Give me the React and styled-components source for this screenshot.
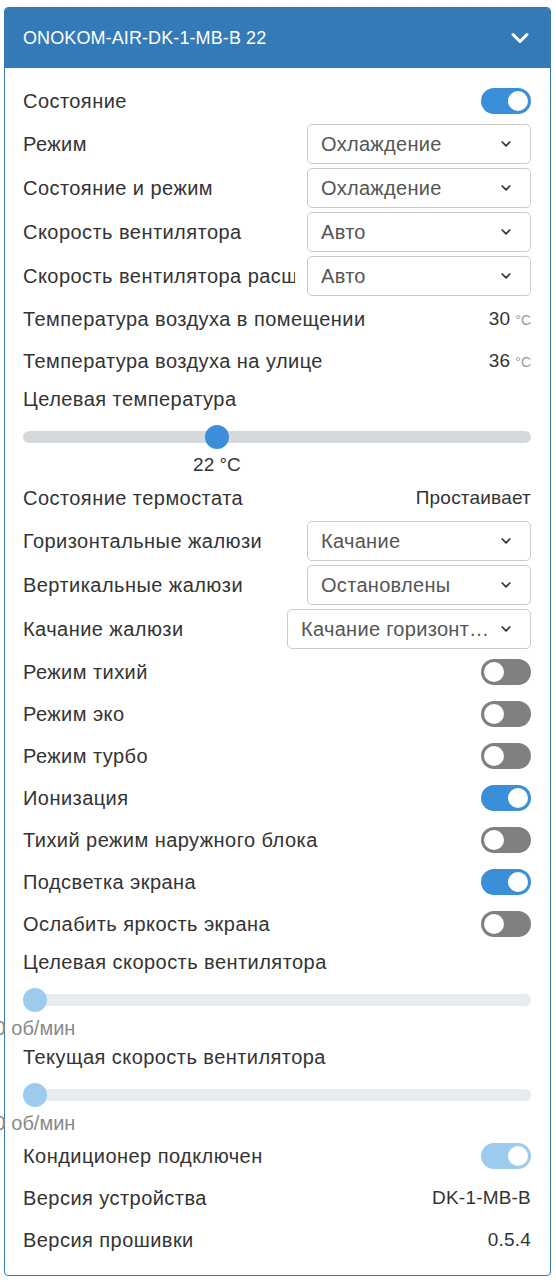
import React from 'react';
import styled, { createGlobalStyle } from 'styled-components';

const GlobalStyle = createGlobalStyle`
  html, body {
    margin: 0;
    padding: 0;
    background: #fff;
  }
  body {
    font-family: "Liberation Sans", Arial, sans-serif;
    color: #333;
  }
`;

const Page = styled.div`
  padding: 7px 5px 6px 4px;
`;

const Card = styled.div`
  border: 1px solid #337ab7;
  border-radius: 4px;
  background: #fff;
`;

const Header = styled.div`
  height: 60px;
  background: #337ab7;
  border-radius: 3px 3px 0 0;
  display: flex;
  align-items: center;
  justify-content: space-between;
  padding: 0 16px 0 18px;
  color: #fff;
  font-size: 18px;
  letter-spacing: 0.1px;
`;

const Body = styled.div`
  padding: 12px 19px 14px 18px;
`;

const Row = styled.div`
  display: flex;
  align-items: center;
  justify-content: space-between;
  gap: 12px;
  height: ${p => (p.$select ? 44 : 42)}px;
`;

const Label = styled.div`
  flex: 1 1 auto;
  min-width: 0;
  font-size: 20px;
  letter-spacing: 0.45px;
  white-space: nowrap;
  overflow: hidden;
`;

const Value = styled.div`
  font-size: 19px;
  letter-spacing: 0.2px;
  white-space: nowrap;
  flex-shrink: 0;
`;

const Unit = styled.span`
  font-size: 14px;
  letter-spacing: 0;
  color: #999;
  margin-left: 5px;
`;

const Select = styled.div`
  flex-shrink: 0;
  width: ${p => p.$width || 224}px;
  height: 40px;
  box-sizing: border-box;
  border: 1px solid #ccc;
  border-radius: 5px;
  display: flex;
  align-items: center;
  gap: 8px;
  padding: 0 19px 0 13px;
  color: #555;
  font-size: 20px;
  letter-spacing: 0.3px;
`;

const SelectText = styled.span`
  flex: 1;
  min-width: 0;
  white-space: nowrap;
  overflow: hidden;
  text-overflow: ellipsis;
`;

const Toggle = styled.div`
  flex-shrink: 0;
  width: 50px;
  height: 26px;
  box-sizing: border-box;
  border-radius: 13px;
  padding: 3px;
  display: flex;
  justify-content: ${p => (p.$on ? 'flex-end' : 'flex-start')};
  background: ${p => (p.$disabled ? '#9ccbee' : p.$on ? '#3b8fd9' : '#808080')};
`;

const Knob = styled.div`
  width: 20px;
  height: 20px;
  border-radius: 50%;
  background: #fff;
`;

const SliderBlock = styled.div`
  padding-bottom: 2px;
`;

const SliderLabel = styled.div`
  height: 34px;
  line-height: 34px;
  font-size: 20px;
  letter-spacing: 0.45px;
  white-space: nowrap;
`;

const Track = styled.div`
  position: relative;
  margin-top: 15px;
  height: 12px;
  border-radius: 6px;
  background: ${p => (p.$disabled ? '#e9ecef' : '#d6d9dc')};
`;

const Thumb = styled.div`
  position: absolute;
  top: -6px;
  width: 24px;
  height: 24px;
  border-radius: 50%;
  background: ${p => (p.$disabled ? '#9ccbee' : '#3a8fd8')};
`;

const ValueLine = styled.div`
  position: relative;
  margin-top: 12px;
  height: 20px;
`;

const SliderValue = styled.div`
  position: absolute;
  top: 0;
  transform: translateX(-50%);
  font-size: ${p => (p.$disabled ? 20 : 19)}px;
  line-height: 20px;
  white-space: nowrap;
  color: ${p => (p.$disabled ? '#888' : '#333')};
`;

const HeaderChevron = () => (
  <svg width="28" height="28" viewBox="0 0 24 24" fill="none" stroke="#fff" strokeWidth="2.6" strokeLinecap="round" strokeLinejoin="round">
    <polyline points="6 9 12 15 18 9" />
  </svg>
);

const SmallChevron = () => (
  <svg width="10" height="6" viewBox="0 0 10 6" fill="none" stroke="#333" strokeWidth="1.7" strokeLinecap="round" strokeLinejoin="round">
    <polyline points="1.2 1 5 4.8 8.8 1" />
  </svg>
);

const SelectRow = ({ label, value, width }) => (
  <Row $select>
    <Label>{label}</Label>
    <Select $width={width}>
      <SelectText>{value}</SelectText>
      <SmallChevron />
    </Select>
  </Row>
);

const SwitchRow = ({ label, on, disabled }) => (
  <Row>
    <Label>{label}</Label>
    <Toggle $on={on} $disabled={disabled}>
      <Knob />
    </Toggle>
  </Row>
);

const InfoRow = ({ label, value, unit }) => (
  <Row>
    <Label>{label}</Label>
    <Value>
      {value}
      {unit && <Unit>{unit}</Unit>}
    </Value>
  </Row>
);

const Slider = ({ label, value, frac, disabled }) => (
  <SliderBlock>
    <SliderLabel>{label}</SliderLabel>
    <Track $disabled={disabled}>
      <Thumb $disabled={disabled} style={{ left: `calc((100% - 24px) * ${frac})` }} />
    </Track>
    <ValueLine>
      <SliderValue $disabled={disabled} style={{ left: `calc(12px + (100% - 24px) * ${frac})` }}>
        {value}
      </SliderValue>
    </ValueLine>
  </SliderBlock>
);

export default function App() {
  return (
    <Page>
      <GlobalStyle />
      <Card>
        <Header>
          <span>ONOKOM-AIR-DK-1-MB-B 22</span>
          <HeaderChevron />
        </Header>
        <Body>
          <SwitchRow label="Состояние" on />
          <SelectRow label="Режим" value="Охлаждение" />
          <SelectRow label="Состояние и режим" value="Охлаждение" />
          <SelectRow label="Скорость вентилятора" value="Авто" />
          <SelectRow label="Скорость вентилятора расширенная" value="Авто" />
          <InfoRow label="Температура воздуха в помещении" value="30" unit="°C" />
          <InfoRow label="Температура воздуха на улице" value="36" unit="°C" />
          <Slider label="Целевая температура" value="22 °C" frac={0.376} />
          <InfoRow label="Состояние термостата" value="Простаивает" />
          <SelectRow label="Горизонтальные жалюзи" value="Качание" />
          <SelectRow label="Вертикальные жалюзи" value="Остановлены" />
          <SelectRow label="Качание жалюзи" value="Качание горизонтальное" width={244} />
          <SwitchRow label="Режим тихий" />
          <SwitchRow label="Режим эко" />
          <SwitchRow label="Режим турбо" />
          <SwitchRow label="Ионизация" on />
          <SwitchRow label="Тихий режим наружного блока" />
          <SwitchRow label="Подсветка экрана" on />
          <SwitchRow label="Ослабить яркость экрана" />
          <Slider label="Целевая скорость вентилятора" value="0 об/мин" frac={0} disabled />
          <Slider label="Текущая скорость вентилятора" value="0 об/мин" frac={0} disabled />
          <SwitchRow label="Кондиционер подключен" on disabled />
          <InfoRow label="Версия устройства" value="DK-1-MB-B" />
          <InfoRow label="Версия прошивки" value="0.5.4" />
        </Body>
      </Card>
    </Page>
  );
}
